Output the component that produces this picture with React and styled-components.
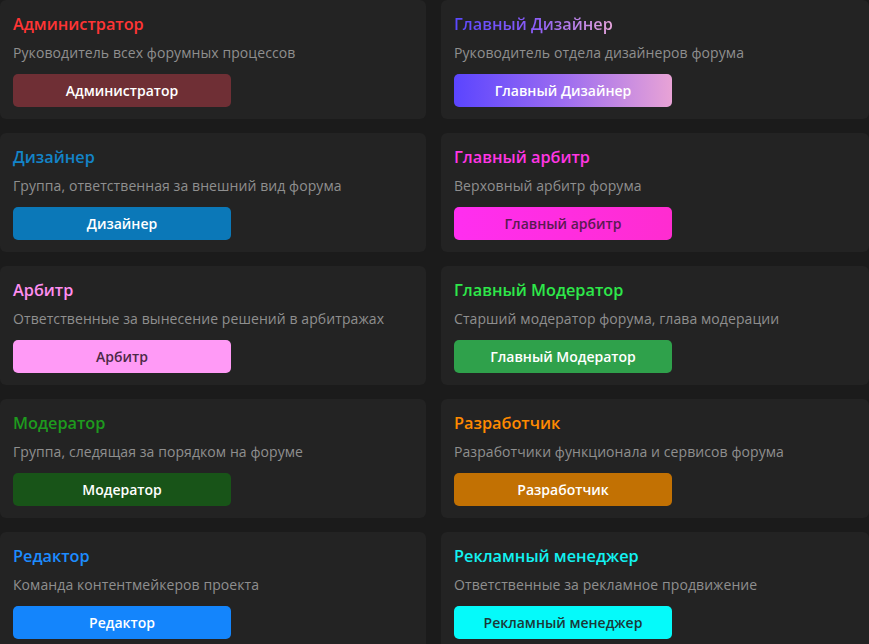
import React from 'react';
import styled, { createGlobalStyle } from 'styled-components';

const GlobalStyle = createGlobalStyle`
  body {
    margin: 0;
    background: #1b1b1b;
    font-family: "Open Sans", "Noto Sans", sans-serif;
  }
`

const Grid = styled.div`
  display: grid;
  grid-template-columns: 426px 1fr;
  column-gap: 15px;
  row-gap: 14px;
`

const Card = styled.div`
  background: #232323;
  border-radius: 6px;
  padding: 13px 13px 12px;
  display: flex;
  flex-direction: column;
  align-items: flex-start;
`

const Title = styled.h3`
  margin: 0;
  font-size: 16.3px;
  line-height: 23px;
  font-weight: 600;
  color: ${p => p.color};
  ${p => p.gradient && `
    background: ${p.gradient};
    -webkit-background-clip: text;
    background-clip: text;
    color: transparent;
  `}
`

const Description = styled.p`
  margin: 7px 0 0;
  font-size: 14px;
  line-height: 20px;
  letter-spacing: 0.08px;
  color: #8f8f8f;
`

const RoleButton = styled.button`
  margin-top: 11px;
  width: 218px;
  height: 33px;
  border: none;
  border-radius: 5px;
  background: ${p => p.bg};
  color: ${p => p.fg || '#fff'};
  font-family: inherit;
  font-size: 14px;
  font-weight: 600;
  cursor: pointer;
`

const roles = [
  { name: 'Администратор', desc: 'Руководитель всех форумных процессов', color: '#ff3535', bg: '#6f2f35' },
  { name: 'Главный Дизайнер', desc: 'Руководитель отдела дизайнеров форума', gradient: 'linear-gradient(90deg, #5a48ff 0%, #8a5cf5 50%, #e6a4dc 100%)', bg: 'linear-gradient(90deg, #5b45ff 0%, #9c6cf0 50%, #e8a3d6 100%)' },
  { name: 'Дизайнер', desc: 'Группа, ответственная за внешний вид форума', color: '#1384c8', bg: '#0b78b8' },
  { name: 'Главный арбитр', desc: 'Верховный арбитр форума', color: '#ff36e4', bg: 'linear-gradient(90deg, #ff2ef0 0%, #ff2cd0 100%)', fg: '#5b1a52' },
  { name: 'Арбитр', desc: 'Ответственные за вынесение решений в арбитражах', color: '#ff8ef0', bg: '#ff9af6', fg: '#4c2946' },
  { name: 'Главный Модератор', desc: 'Старший модератор форума, глава модерации', color: '#2ee84a', bg: '#2fa14b' },
  { name: 'Модератор', desc: 'Группа, следящая за порядком на форуме', color: '#1e9a1e', bg: '#185418' },
  { name: 'Разработчик', desc: 'Разработчики функционала и сервисов форума', color: '#ff8a00', bg: '#c27103' },
  { name: 'Редактор', desc: 'Команда контентмейкеров проекта', color: '#1d8cff', bg: '#1485fc' },
  { name: 'Рекламный менеджер', desc: 'Ответственные за рекламное продвижение', color: '#12f2f2', bg: '#05fafa', fg: '#1b3838' },
]

export default function App() {
  return (
    <>
      <GlobalStyle />
      <Grid>
        {roles.map(role => (
          <Card key={role.name}>
            <Title color={role.color} gradient={role.gradient}>{role.name}</Title>
            <Description>{role.desc}</Description>
            <RoleButton bg={role.bg} fg={role.fg}>{role.name}</RoleButton>
          </Card>
        ))}
      </Grid>
    </>
  )
}
